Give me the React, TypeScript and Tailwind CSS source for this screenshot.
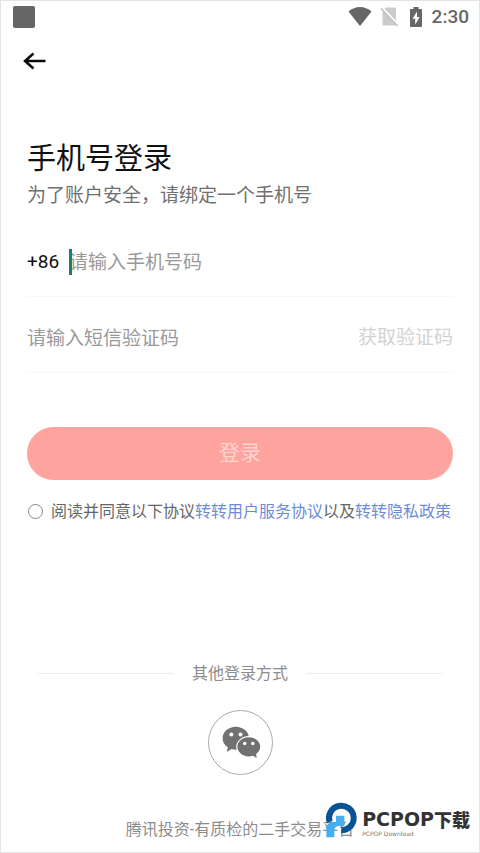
import React from "react";

function StatusBar() {
  return (
    <div className="flex h-8 items-center justify-between pl-3 pr-[10px] text-[#666666]">
      <span className="size-[22px] rounded-[2px] bg-[#666666]" />
      <div className="flex items-center">
        <svg className="h-5 w-6" viewBox="0 0 24 20" fill="currentColor" aria-hidden="true">
          <path d="M0.5 4.500C7-1.500 17-1.500 23.500 4.500L12 19Z" />
        </svg>
        <svg className="ml-2 h-5 w-[18px]" viewBox="0 0 18 20" aria-hidden="true">
          <path d="M6 .5h9a1 1 0 0 1 1 1V18.500H3.500a1 1 0 0 1-1-1V3.500z" fill="#cbcbcb" />
          <path d="M2 .5L18 17.500" stroke="#fff" strokeWidth="2" />
          <path d="M1 1.500L17.500 19" stroke="#c2c2c2" strokeWidth="1.600" />
        </svg>
        <svg className="ml-3 h-5 w-3" viewBox="0 0 12 20" fill="currentColor" aria-hidden="true">
          <path d="M3.500 0h5v2H11.200a.8.8 0 0 1 .8.8V19.200a.8.8 0 0 1-.8.8H.8a.8.8 0 0 1-.8-.8V2.800A.8.8 0 0 1 .8 2H3.500z" />
          <path d="M7 4.500L2.500 11.700H5.200V17.500L9.700 10H7z" fill="#fff" />
        </svg>
        <span className="ml-[10px] font-['Roboto',sans-serif] text-[19px] font-medium leading-6">2:30</span>
      </div>
    </div>
  );
}

function WeChatIcon() {
  return (
    <svg className="size-[63px]" viewBox="0 0 63 63" fill="#717171" aria-hidden="true">
      <path d="M26.800 15.700c7.300 0 13.200 5 13.200 11.500s-5.900 11.500-13.200 11.500c-1.500 0-2.900-.2-4.200-.6L17.800 41l1-4.700c-3.200-2.100-5.200-5.300-5.200-9.100 0-6.500 5.900-11.500 13.200-11.500z" />
      <path
        d="M39.800 26.300c6.300 0 11.400 4.200 11.400 9.500 0 2.900-1.600 5.500-4.100 7.300l.6 3.900-3.800-2.200c-1.300.4-2.700.6-4.100.6-6.300 0-11.400-4.300-11.400-9.600s5.100-9.500 11.400-9.500z"
        stroke="#fff"
        strokeWidth="2.400"
        paintOrder="stroke"
      />
      <g fill="#fff">
        <circle cx="22.300" cy="23.500" r="2" />
        <circle cx="31.500" cy="23.500" r="2" />
        <circle cx="35.700" cy="32.500" r="1.700" />
        <circle cx="43.800" cy="32.500" r="1.700" />
      </g>
    </svg>
  );
}

function Watermark() {
  return (
    <div className="absolute bottom-[10px] right-[9px] flex items-start">
      <svg className="h-11 w-10" viewBox="0 0 120 132" aria-hidden="true">
        <path d="M23 72A37 37 0 1 1 58 97" fill="none" stroke="#0b5196" strokeWidth="18" />
        <path d="M13 84C18 76 28 73 42 73V53H67V84H54C44 84 37 87 37 97V118H13Z" fill="#43aef0" />
      </svg>
      <div className="flex flex-col pt-[10px] text-[#333333]">
        <div className="flex items-center leading-[22px]">
          <span className="font-['DejaVu_Sans',sans-serif] text-[19px] font-bold">PCPOP</span>
          <span className="font-['Noto_Sans_CJK_SC',sans-serif] text-[18px] font-black">下载</span>
        </div>
        <span className="font-['DejaVu_Sans',sans-serif] text-[6px] leading-[7px] text-[#777777]">PCPOP Download</span>
      </div>
    </div>
  );
}

export default function App() {
  return (
    <div className="relative flex min-h-screen flex-col border border-[#e4e4e4] bg-white font-['Roboto','Noto_Sans_CJK_SC',sans-serif]">
      <StatusBar />
      <header className="flex h-14 items-center px-[22px]">
        <button type="button" aria-label="返回">
          <svg className="h-5 w-6" viewBox="0 0 24 20" fill="none" stroke="#0a0a0a" strokeWidth="2.500" aria-hidden="true">
            <path d="M22.500 10H2M10.500 2.500L2 10l8.500 7.500" />
          </svg>
        </button>
      </header>

      <main className="flex grow flex-col px-[26px] pb-[10px] pt-[52px]">
        <h1 className="text-[29px] leading-9 text-[#111111]">手机号登录</h1>
        <p className="mt-1 text-[19px] leading-[30px] text-[#707070]">为了账户安全，请绑定一个手机号</p>

        <form className="mt-4 flex flex-col" onSubmit={(e) => e.preventDefault()}>
          <div className="flex h-[70px] items-center border-b border-[#f7f7f7] pt-[2px] text-[19px]">
            <label htmlFor="phone" className="w-[42px] text-[#111111]">+86</label>
            <div className="relative flex grow items-center">
              <input
                id="phone"
                type="tel"
                placeholder="请输入手机号码"
                className="h-8 w-full min-w-0 bg-transparent outline-none placeholder:text-[#999999]"
              />
              <span className="absolute bottom-1 left-0 h-[26px] w-[3px] bg-[#15806f]" />
            </div>
          </div>
          <div className="mt-[6px] flex h-[70px] items-center border-b border-[#f7f7f7] pt-[2px] text-[19px]">
            <input
              type="text"
              aria-label="短信验证码"
              placeholder="请输入短信验证码"
              className="h-8 w-full min-w-0 bg-transparent outline-none placeholder:text-[#999999]"
            />
            <button type="button" className="h-8 shrink-0 text-[#d2d2d2]">获取验证码</button>
          </div>
          <button type="submit" className="mt-[54px] h-[53px] rounded-full bg-[#fea39e] text-[21px] text-[#ffd3d0]">
            登录
          </button>
          <div className="mt-[19px] flex items-center text-[16px] leading-[22px] text-[#666666]">
            <input
              id="agree"
              type="checkbox"
              className="ml-[1px] mr-2 size-[15px] shrink-0 appearance-none rounded-full border border-[#888888] checked:bg-[#fea39e]"
            />
            <label htmlFor="agree" className="pt-[2px]">
              阅读并同意以下协议<a href="#service" className="text-[#6d8cd8]">转转用户服务协议</a>以及<a href="#privacy" className="text-[#6d8cd8]">转转隐私政策</a>
            </label>
          </div>
        </form>

        <section className="mt-auto flex flex-col items-center text-[16px] leading-6 text-[#8c8c8c]">
          <div className="flex w-full items-center gap-[18px] px-[10px]">
            <span className="h-px grow bg-[#eeeeee]" />
            <h2 className="pt-[2px]">其他登录方式</h2>
            <span className="h-px grow bg-[#eeeeee]" />
          </div>
          <button
            type="button"
            aria-label="微信登录"
            className="mt-6 flex size-[65px] items-center justify-center rounded-full border border-[#aaaaaa]"
          >
            <WeChatIcon />
          </button>
          <p className="mt-[43px]">腾讯投资-有质检的二手交易平台</p>
        </section>
      </main>
      <Watermark />
    </div>
  );
}
